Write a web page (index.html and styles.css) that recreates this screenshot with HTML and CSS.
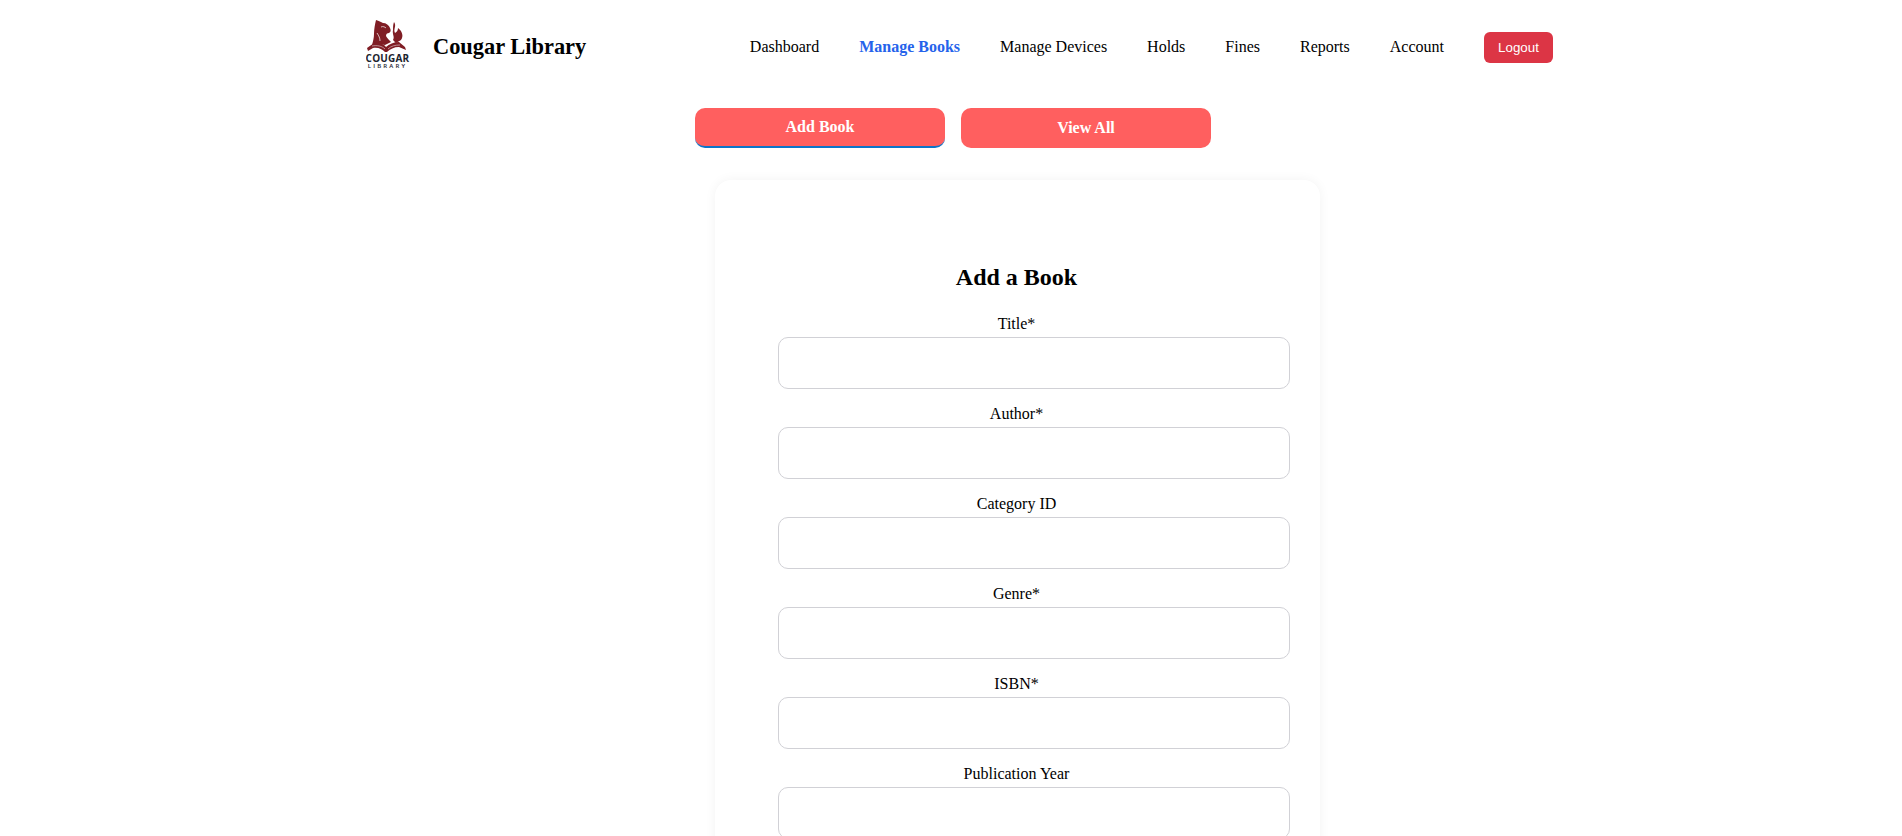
FILE: index.html
```html
<!DOCTYPE html>
<html lang="en">
<head>
<meta charset="utf-8">
<title>Cougar Library</title>
<link rel="stylesheet" href="styles.css">
</head>
<body>
<header class="header">
  <div class="brand">
    <svg class="logo" viewBox="0 0 44 50" width="44" height="50" aria-hidden="true">
      <path class="logo-red" d="M10 1 C13 2 15 3 17 4 C20 4 23 6 24 9 C25 11 25 13 23 14 C21 14 20 15 20 17 C21 19 23 21 25 23 L19 26 L13 25 L6 26 C7 22 8 19 8 15 C8 10 9 5 10 1 Z"/>
      <path class="logo-cut" d="M15 8 C17 7 19 8 20 9 M11 14 C13 17 14 19 14 22"/>
      <path class="logo-red" d="M28 3 C31 7 27 10 29 14 C31 13 32 11 32 9 C36 12 38 17 35 21 L30 24 L27 21 C29 18 26 15 27 11 C27 8 27 6 28 3 Z"/>
      <path class="logo-red" d="M1 29 L8 24 C13 23 18 25 20 28 C23 25 28 23 33 23 L39 28 L40 31 L33 28 C28 28 24 30 21 33 L19 33 C16 30 12 28 7 29 L2 32 Z"/>
      <path class="logo-cut thin" d="M6 27 C11 26 16 27 19 30 M22 30 C25 27 29 26 34 26"/>
      <text class="logo-main" x="21.5" y="42.5" text-anchor="middle">COUGAR</text>
      <text class="logo-sub" x="21.5" y="48.5" text-anchor="middle">LIBRARY</text>
    </svg>
    <h1 class="brand-name">Cougar Library</h1>
  </div>
  <nav class="nav">
    <a class="nav-link">Dashboard</a>
    <a class="nav-link active">Manage Books</a>
    <a class="nav-link">Manage Devices</a>
    <a class="nav-link">Holds</a>
    <a class="nav-link">Fines</a>
    <a class="nav-link">Reports</a>
    <a class="nav-link">Account</a>
    <button class="logout" type="button">Logout</button>
  </nav>
</header>
<main class="main">
  <div class="tabs">
    <a class="tab tab-active">Add Book</a>
    <a class="tab">View All</a>
  </div>
  <section class="card">
    <h2 class="card-title">Add a Book</h2>
    <form class="form">
      <div class="field"><label class="label">Title*</label><input class="input" type="text"></div>
      <div class="field"><label class="label">Author*</label><input class="input" type="text"></div>
      <div class="field"><label class="label">Category ID</label><input class="input" type="text"></div>
      <div class="field"><label class="label">Genre*</label><input class="input" type="text"></div>
      <div class="field"><label class="label">ISBN*</label><input class="input" type="text"></div>
      <div class="field"><label class="label">Publication Year</label><input class="input" type="text"></div>
    </form>
  </section>
</main>
</body>
</html>
```
FILE: styles.css
```css
* { box-sizing: border-box; }
html, body { height: 836px; overflow: hidden; }
body {
  margin: 0;
  background: #fff;
  color: #000;
  font-family: "Liberation Serif", serif;
  font-size: 16px;
}
.header {
  width: 1204px;
  height: 94px;
  margin: 0 auto;
  padding: 0 0 0 17px;
  display: flex;
  align-items: center;
  justify-content: space-between;
}
.brand { display: flex; align-items: center; gap: 23px; }
.logo { display: block; margin-bottom: 6px; }
.logo-red { fill: #7f1d24; }
.logo-cut { fill: none; stroke: #fff; stroke-width: .7; }
.logo-cut.thin { stroke-width: .5; }
.logo-main { font-family: "Open Sans", sans-serif; font-size: 10px; font-weight: 700; fill: #1c2430; letter-spacing: .2px; }
.logo-sub { font-family: "Open Sans", sans-serif; font-size: 6px; font-weight: 600; fill: #1c2430; letter-spacing: 2.2px; }
.brand-name { margin: 0; font-size: 22.4px; font-weight: 700; }
.nav { display: flex; align-items: center; gap: 40px; }
.nav-link { color: #000; }
.nav-link.active { color: #2563eb; font-weight: 700; }
.logout {
  width: 69px;
  height: 31px;
  border: 0;
  border-radius: 6px;
  background: #dc3545;
  color: #fff;
  font-family: "Liberation Sans", sans-serif;
  font-size: 13.33px;
}
.main { display: flex; flex-direction: column; align-items: center; padding-left: 4px; }
.tabs { display: flex; gap: 16px; margin: 14px 0 32px 0; }
.tab {
  width: 250px;
  height: 40px;
  border-radius: 10px;
  background: #ff5f5f;
  color: #fff;
  font-weight: 700;
  display: flex;
  align-items: center;
  justify-content: center;
}
.tab-active { border-bottom: 2px solid #0b74c9; }
.card {
  width: 605px;
  margin-left: 129px;
  padding: 64px 65px 64px 63px;
  border-radius: 16px;
  background: #fff;
  box-shadow: 0 0 12px rgba(0, 0, 0, .05);
}
.card-title { margin: 19px 0 24px; font-size: 24px; font-weight: 700; text-align: center; line-height: 28px; }
.form { display: flex; flex-direction: column; }
.field { display: flex; flex-direction: column; height: 90px; }
.label { text-align: center; line-height: 18px; margin-bottom: 4px; }
.input {
  flex: none;
  width: 512px;
  height: 52px;
  padding: 8px 16px;
  border: 1px solid #d1d1d6;
  border-radius: 10px;
  background: #fff;
  outline: none;
}
```
